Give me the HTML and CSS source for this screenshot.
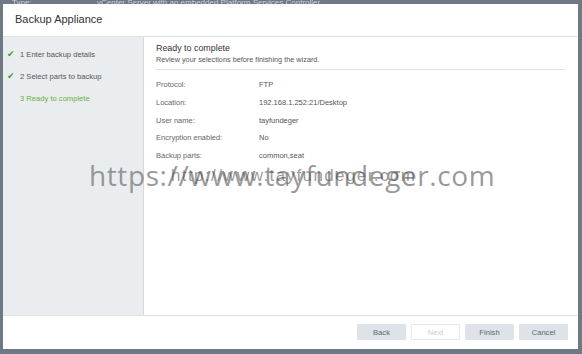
FILE: index.html
```html
<!DOCTYPE html>
<html lang="en">
  <head>
    <meta charset="UTF-8" />
    <title>Backup Appliance</title>
    <link rel="stylesheet" href="styles.css">
  </head>
  <body>
    <div class="behind">
      <span class="behind-label">Type:</span>
      <span class="behind-value">vCenter Server with an embedded Platform Services Controller</span>
    </div>
    <div class="dialog">
      <div class="dialog-header">Backup Appliance</div>

      <div class="dialog-body">
        <ul class="steps">
          <li class="step done"><span class="check">&#10004;</span>1 Enter backup details</li>
          <li class="step done"><span class="check">&#10004;</span>2 Select parts to backup</li>
          <li class="step current">3 Ready to complete</li>
        </ul>

        <div class="content">
          <h3>Ready to complete</h3>
          <p class="subtitle">Review your selections before finishing the wizard.</p>

          <div class="summary">
            <div class="label">Protocol:</div><div class="value">FTP</div>
            <div class="label">Location:</div><div class="value">192.168.1.252:21/Desktop</div>
            <div class="label">User name:</div><div class="value">tayfundeger</div>
            <div class="label">Encryption enabled:</div><div class="value">No</div>
            <div class="label">Backup parts:</div><div class="value">common,seat</div>
          </div>
        </div>
      </div>

      <div class="dialog-footer">
        <button class="btn">Back</button>
        <button class="btn disabled">Next</button>
        <button class="btn">Finish</button>
        <button class="btn">Cancel</button>
      </div>

      <div class="watermark">https://www.tayfundeger.com</div>
      <div class="watermark-small">http://www.tayfundeger.com</div>
    </div>
  </body>
</html>
```

FILE: styles.css
```css
* {
  margin: 0;
  padding: 0;
  box-sizing: border-box;
  font-family: "Liberation Sans", Arial, sans-serif;
}
body {
  background-color: #6f7986;
  width: 582px;
  height: 354px;
  overflow: hidden;
}
.behind {
  height: 4px;
  overflow: hidden;
  font-size: 8px;
  line-height: 5px;
  color: #c9ced4;
  display: flex;
  padding-left: 12px;
}
.behind-label {
  width: 85px;
}
.dialog {
  position: relative;
  margin: 0 4px 0 3px;
  height: 345px;
  background: #ffffff;
  display: flex;
  flex-direction: column;
}
.dialog-header {
  height: 33px;
  padding: 9px 0 0 12px;
  font-size: 11px;
  color: #333;
  border-bottom: 1px solid #dce3e7;
}
.dialog-body {
  display: flex;
  height: 278px;
}
.steps {
  list-style: none;
  width: 141px;
  background: #e9edf0;
  border-right: 1px solid #d3d9dd;
  padding-top: 13px;
}
.step {
  height: 22px;
  font-size: 7.6px;
  color: #555;
  padding-left: 17px;
  position: relative;
}
.check {
  position: absolute;
  left: 4px;
  top: -1px;
  color: #3f9e34;
  font-family: "DejaVu Sans", sans-serif;
  font-size: 9px;
}
.step.current {
  color: #6fad3d;
}
.content {
  flex: 1;
  padding: 6px 13px 0 12px;
}
.content h3 {
  font-weight: normal;
  font-size: 8.9px;
  color: #333;
  line-height: 11px;
}
.subtitle {
  font-size: 7.3px;
  color: #555;
  line-height: 11px;
  padding-bottom: 4px;
  border-bottom: 1px solid #dfe4e7;
}
.summary {
  display: grid;
  grid-template-columns: 103px 1fr;
  grid-auto-rows: 17.8px;
  padding-top: 10px;
  font-size: 7.5px;
  color: #666;
}
.value {
  color: #555;
}
.dialog-footer {
  flex: 1;
  border-top: 1px solid #dce3e7;
  display: flex;
  justify-content: flex-end;
  gap: 5px;
  padding: 8px 10px 0 0;
}
.btn {
  width: 49px;
  height: 16px;
  border: 1px solid #dde3e8;
  background: #dde3e8;
  color: #5c6670;
  font-size: 7.6px;
  border-radius: 1px;
}
.btn.disabled {
  background: #ffffff;
  border-color: #e3e7ea;
  color: #c8cdd1;
}
.watermark {
  position: absolute;
  left: 86px;
  top: 152px;
  font-family: "Open Sans", sans-serif;
  font-size: 28px;
  letter-spacing: 0.6px;
  color: rgba(120, 120, 120, 0.75);
  white-space: nowrap;
}
.watermark-small {
  position: absolute;
  left: 168px;
  top: 162px;
  font-family: "Liberation Sans", sans-serif;
  font-size: 17px;
  letter-spacing: 1.4px;
  color: rgba(70, 70, 70, 0.55);
  white-space: nowrap;
}
```
